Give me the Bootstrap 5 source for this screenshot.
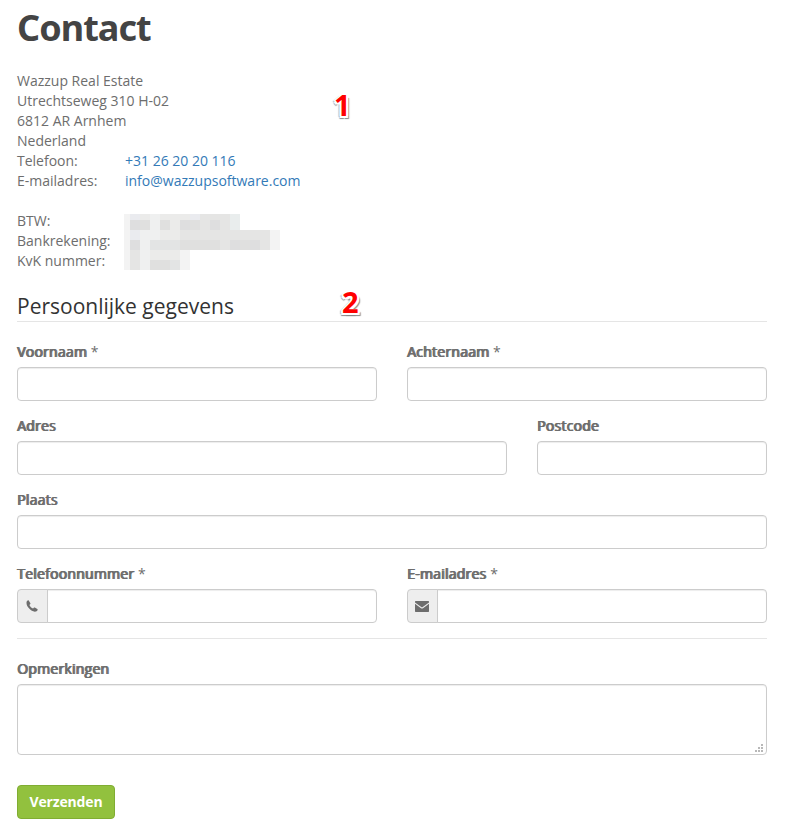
<!DOCTYPE html>
<html lang="nl">
<head>
<meta charset="utf-8">
<meta name="viewport" content="width=device-width, initial-scale=1">
<title>Contact</title>
<link href="https://cdn.jsdelivr.net/npm/bootstrap@5.3.0/dist/css/bootstrap.min.css" rel="stylesheet">
<style>
body{font-family:"Open Sans",sans-serif;font-size:14px;line-height:20px;color:#6d6d6d;background:#fff;overflow:hidden}
.page{width:788px;height:830px;padding:8px 21px 0 17px}
.page-title{font:700 36px/40px "Noto Sans","Open Sans",sans-serif;letter-spacing:-.95px;color:#444;margin:0 0 23px}
.address{height:200px}
.address a{color:#337ab7;text-decoration:none}
.term{width:108px}
.redacted{left:107px;top:143px}
.marker{font:700 29px/30px "Open Sans",sans-serif;color:#f00;text-shadow:-2px 0 #fff,2px 0 #fff,0 2px #fff,2px 2px #fff,-2px 2px #fff,3px 3px 1px #888,-2px 3px 1px #888,-3px 1px 1px #bbb}
.marker-one{left:317px;top:19px}
.marker-two{left:325px;top:-8px}
.section-title{font-size:21px;line-height:23px;font-weight:400;color:#333;border-bottom:1px solid #e5e5e5;height:27px;margin:24px 0 20px}
.form-row{--bs-gutter-x:30px;height:74px}
.form-label{display:block;margin:0 0 5px;line-height:20px;letter-spacing:.24px;text-shadow:.9px 0 #6d6d6d,-.3px 0 #6d6d6d}
.form-label span{text-shadow:none}
.form-control{height:34px;border:1px solid #ccc;border-radius:4px;padding:6px 12px;font-size:14px;box-shadow:inset 0 1px 1px rgba(0,0,0,.075)}
.input-group-text{width:31px;height:34px;padding:0 1px 0 0;border:1px solid #ccc;border-radius:4px;background:#eee;color:#6d6d6d}
.rule{margin:0 0 20px;border-top:1px solid #e5e5e5;opacity:1}
textarea.form-control{height:71px;min-height:0;resize:none}
.grip{right:4px;bottom:3px}
.btn-send{--bs-btn-color:#fff;--bs-btn-bg:#92c13e;--bs-btn-border-color:#80ad32;--bs-btn-hover-color:#fff;--bs-btn-hover-bg:#80ad32;--bs-btn-font-size:14px;--bs-btn-font-weight:700;--bs-btn-border-radius:4px;width:98px;height:34px;padding:0;line-height:20px;letter-spacing:-.15px;margin-top:30px}
</style>
</head>
<body>
<main class="page">
  <h1 class="page-title"><span>Contact</span></h1>
  <section class="address position-relative">
    <div>Wazzup Real Estate</div>
    <div>Utrechtseweg 310 H-02</div>
    <div>6812 AR Arnhem</div>
    <div>Nederland</div>
    <div class="d-flex"><span class="term">Telefoon:</span><a href="#">+31 26 20 20 116</a></div>
    <div class="d-flex mb-3 pb-1"><span class="term">E-mailadres:</span><a href="#">info@wazzupsoftware.com</a></div>
    <div>BTW:</div>
    <div>Bankrekening:</div>
    <div>KvK nummer:</div>
    <svg class="redacted position-absolute" width="156" height="56" shape-rendering="crispEdges" aria-hidden="true">
      <path fill="#f3f3f3" d="M0 0h6v56H0zM146 16h10v20h-10zM56 36h10v20H56z"/>
      <path fill="#ebebea" d="M6 0h110v16h30v20H56v20H6z"/>
      <path fill="#e5e5e4" d="M76 0h30v16H76zM116 16h30v20h-30zM56 16h60v20H56zM6 36h10v20H6z"/>
      <path fill="#eaebef" d="M6 0h10v6H6zM66 0h10v6H66zM6 16h10v10H6z"/>
      <path fill="#eff0f0" d="M26 0h10v16H26zM16 16h20v10H16zM16 26h10v30H16z"/>
      <path fill="#dededf" d="M6 6h10v10H6zM6 26h10v10H6zM56 6h10v10H56zM86 6h10v10H86zM106 26h10v10h-10zM126 26h10v10h-10z"/>
      <path fill="#e0e0df" d="M16 6h10v10H16zM36 6h10v10H36zM66 6h10v10H66zM56 26h40v10H56zM116 26h10v10h-10zM26 46h20v10H26z"/>
      <path fill="#e3e4e4" d="M26 26h30v10H26zM46 46h10v10H46z"/>
      <path fill="#e9eded" d="M106 0h10v16h-10z"/>
      <path fill="#f3f3f3" d="M56 46h10v10H56z"/>
    </svg>
    <span class="marker marker-one position-absolute">1</span>
  </section>
  <form>
    <h2 class="section-title position-relative">Persoonlijke gegevens<span class="marker marker-two position-absolute">2</span></h2>
    <div class="row form-row">
      <div class="col-6"><label class="form-label" for="fn">Voornaam <span>*</span></label><input class="form-control" id="fn"></div>
      <div class="col-6"><label class="form-label" for="ln">Achternaam <span>*</span></label><input class="form-control" id="ln"></div>
    </div>
    <div class="row form-row">
      <div class="col-8"><label class="form-label" for="ad">Adres</label><input class="form-control" id="ad"></div>
      <div class="col-4"><label class="form-label" for="pc">Postcode</label><input class="form-control" id="pc"></div>
    </div>
    <div class="row form-row">
      <div class="col-12"><label class="form-label" for="pl">Plaats</label><input class="form-control" id="pl"></div>
    </div>
    <div class="row form-row">
      <div class="col-6"><label class="form-label" for="tel">Telefoonnummer <span>*</span></label>
        <div class="input-group flex-nowrap"><span class="input-group-text justify-content-center"><svg width="12" height="12" viewBox="0 0 12 12" aria-hidden="true"><path fill="currentColor" d="M2.7.4 4.4 3.3c.2.4.1.7-.3 1l-.7.6c.9 1.7 2 2.8 3.7 3.7l.7-.8c.3-.3.6-.4 1-.2l2.5 1.4c.4.2.5.5.3 1-.4 1.3-1.3 1.7-2.8 1.7C5 11.4.5 6.9.5 3.1.5 1.7.9.8 2 .3c.3-.2.5-.1.7.1z"/></svg></span><input class="form-control" id="tel"></div></div>
      <div class="col-6"><label class="form-label" for="em">E-mailadres <span>*</span></label>
        <div class="input-group flex-nowrap"><span class="input-group-text justify-content-center"><svg width="14" height="11" viewBox="0 0 14 11" aria-hidden="true"><path fill="currentColor" d="M.6 0h12.8q.6 0 .6.7v.8L7 6.5 0 1.5V.7Q0 0 .6 0zM0 2.8l6 4.4q1 .7 2 0l6-4.4v7.5q0 .7-.6.7H.6q-.6 0-.6-.7z"/></svg></span><input class="form-control" id="em"></div></div>
    </div>
    <hr class="rule">
    <label class="form-label" for="op">Opmerkingen</label>
    <div class="position-relative"><textarea class="form-control" id="op"></textarea>
      <svg class="grip position-absolute" width="8" height="8" fill="#b8b8b8" shape-rendering="crispEdges" aria-hidden="true"><path d="M6 0h2v2H6zM3 3h2v2H3zM6 3h2v2H6zM0 6h2v2H0zM3 6h2v2H3zM6 6h2v2H6z"/></svg></div>
    <button type="button" class="btn btn-send d-block">Verzenden</button>
  </form>
</main>
<script src="https://cdn.jsdelivr.net/npm/bootstrap@5.3.0/dist/js/bootstrap.bundle.min.js"></script>
</body>
</html>
